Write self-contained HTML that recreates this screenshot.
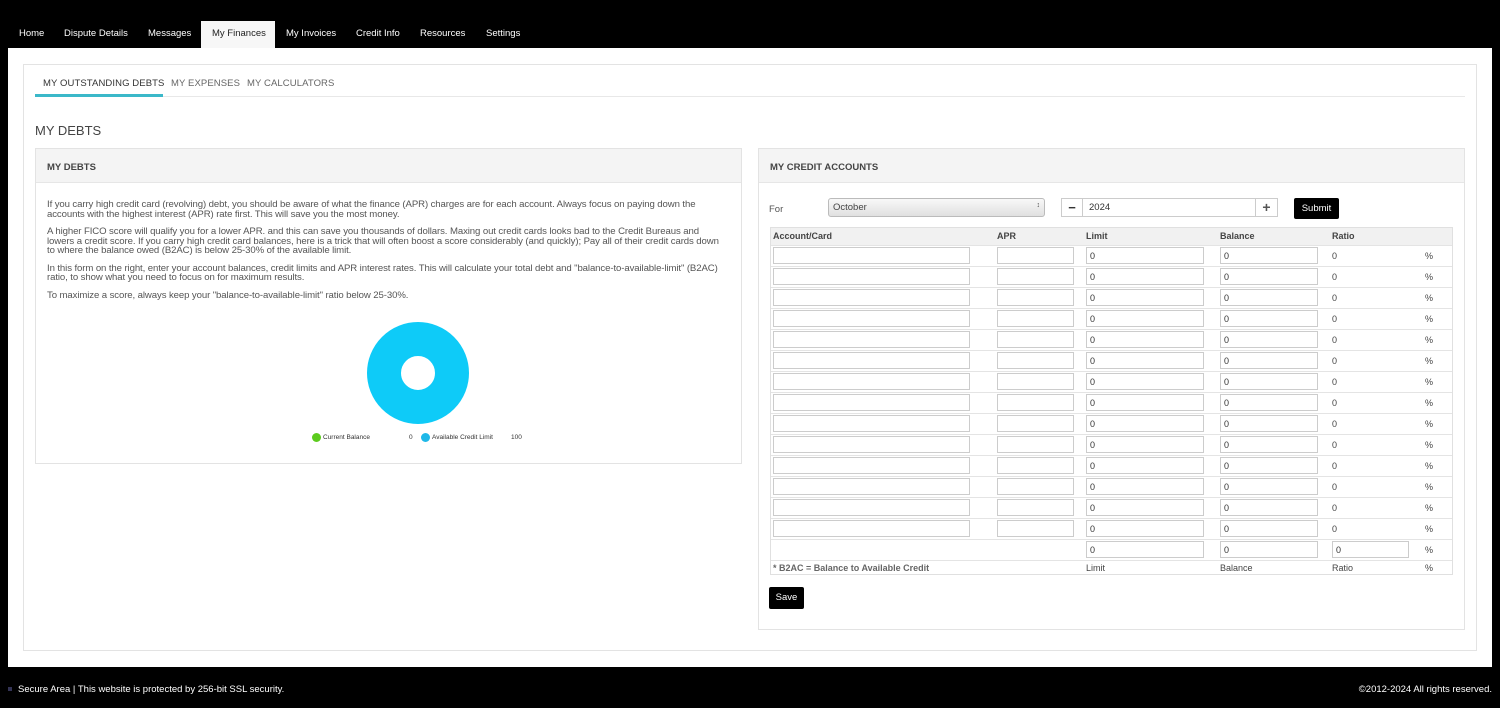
<!DOCTYPE html>
<html><head><meta charset="utf-8"><style>
*{box-sizing:border-box;margin:0;padding:0}
body{width:1500px;height:708px;background:#000;font-family:"Liberation Sans",sans-serif;position:relative;overflow:hidden;color:#333}
.a{position:absolute}
.nav{font-size:9.5px;color:#fff;top:28px}
.tab{left:201px;top:21px;width:74px;height:27px;background:#f7f7f7}
.main{left:8px;top:48px;width:1484px;height:619px;background:#fff}
.inner{left:23px;top:64px;width:1454px;height:587px;border:1px solid #e3e3e3}
.sub{font-size:9.5px;top:78px;color:#666;letter-spacing:.1px}
.panel{border:1px solid #e3e3e3;background:#fff}
.ph{background:#f4f4f4;border-bottom:1px solid #e6e6e6;height:34px;font-size:9.5px;font-weight:bold;color:#444;padding:13px 0 0 11px}
.txt{font-size:9.6px;color:#555;line-height:9.5px;letter-spacing:-.1px;width:676px}
.txt p{margin-bottom:8px}
.tb{left:770px;top:227px;width:683px;height:348px;border:1px solid #e0e0e0;font-size:9px;color:#444}
.r{position:absolute;left:0;width:681px;height:21px;border-top:1px solid #e4e4e4}
.r>*{position:absolute}
.in{height:17px;top:1px;border:1px solid #ccc;font-size:9px;padding:3px 0 0 3px;color:#333}
.t{top:5px}
.c1{left:2px;width:197px}.c2{left:226px;width:77px}.c3{left:315px;width:118px}.c4{left:449px;width:98px}.c5{left:561px}.c6{left:654px}
</style></head><body>
<div class="a nav tab"></div>
<div class="a nav" style="left:19px">Home</div>
<div class="a nav" style="left:64px">Dispute Details</div>
<div class="a nav" style="left:148px">Messages</div>
<div class="a nav" style="left:212px;color:#222">My Finances</div>
<div class="a nav" style="left:286px">My Invoices</div>
<div class="a nav" style="left:356px">Credit Info</div>
<div class="a nav" style="left:420px">Resources</div>
<div class="a nav" style="left:486px">Settings</div>
<div class="a main"></div>
<div class="a inner"></div>
<div class="a sub" style="left:43px;color:#333">MY OUTSTANDING DEBTS</div>
<div class="a sub" style="left:171px">MY EXPENSES</div>
<div class="a sub" style="left:247px">MY CALCULATORS</div>
<div class="a" style="left:35px;top:96px;width:1430px;height:1px;background:#e8e8e8"></div>
<div class="a" style="left:35px;top:94px;width:128px;height:3px;background:#3bb8c9"></div>
<div class="a" style="left:35px;top:123px;font-size:13px;color:#444">MY DEBTS</div>

<div class="a panel" style="left:35px;top:148px;width:707px;height:316px"><div class="ph">MY DEBTS</div></div>
<div class="a txt" style="left:47px;top:200px">
<p>If you carry high credit card (revolving) debt, you should be aware of what the finance (APR) charges are for each account. Always focus on paying down the accounts with the highest interest (APR) rate first. This will save you the most money.</p>
<p>A higher FICO score will qualify you for a lower APR. and this can save you thousands of dollars. Maxing out credit cards looks bad to the Credit Bureaus and lowers a credit score. If you carry high credit card balances, here is a trick that will often boost a score considerably (and quickly); Pay all of their credit cards down to where the balance owed (B2AC) is below 25-30% of the available limit.</p>
<p>In this form on the right, enter your account balances, credit limits and APR interest rates. This will calculate your total debt and "balance-to-available-limit" (B2AC) ratio, to show what you need to focus on for maximum results.</p>
<p>To maximize a score, always keep your "balance-to-available-limit" ratio below 25-30%.</p>
</div>
<svg class="a" style="left:360px;top:316px" width="120" height="115"><circle cx="58" cy="57" r="34" fill="none" stroke="#0ecbf8" stroke-width="34"/></svg>
<div class="a" style="left:312px;top:433px;width:9px;height:9px;border-radius:50%;background:#5ccb1e"></div>
<div class="a" style="left:323px;top:434px;font-size:6.5px;color:#333">Current Balance</div>
<div class="a" style="left:409px;top:434px;font-size:6.5px">0</div>
<div class="a" style="left:421px;top:433px;width:9px;height:9px;border-radius:50%;background:#1fb8e8"></div>
<div class="a" style="left:432px;top:434px;font-size:6.5px">Available Credit Limit</div>
<div class="a" style="left:511px;top:434px;font-size:6.5px">100</div>

<div class="a panel" style="left:758px;top:148px;width:707px;height:482px"><div class="ph">MY CREDIT ACCOUNTS</div></div>
<div class="a" style="left:769px;top:204px;font-size:9.5px;color:#555">For</div>
<div class="a" style="left:828px;top:198px;width:217px;height:19px;border:1px solid #bbb;border-radius:3px;background:linear-gradient(#f8f8f8,#e0e0e0);font-size:9.5px;padding:3px 4px;color:#444">October<span style="float:right;font-size:7px">&#x2195;</span></div>
<div class="a" style="left:1061px;top:198px;width:22px;height:19px;border:1px solid #ccc;font-size:13px;text-align:center;line-height:17px;font-weight:bold">&minus;</div>
<div class="a" style="left:1083px;top:198px;width:173px;height:19px;border:1px solid #ccc;border-left:none;font-size:9.5px;padding:3px 6px">2024</div>
<div class="a" style="left:1255px;top:198px;width:23px;height:19px;border:1px solid #ccc;font-size:14px;text-align:center;line-height:17px;font-weight:bold;color:#555">+</div>
<div class="a" style="left:1294px;top:198px;width:45px;height:21px;background:#000;color:#fff;font-size:9.5px;text-align:center;line-height:21px;border-radius:2px">Submit</div>

<div class="a tb">
<div class="r" style="top:0;height:18px;border:none;background:#f1f1f1;font-weight:bold"><span class="t c1" style="top:3px">Account/Card</span><span class="t c2" style="top:3px">APR</span><span class="t c3" style="top:3px">Limit</span><span class="t c4" style="top:3px">Balance</span><span class="t c5" style="top:3px">Ratio</span></div>
<div class="r" style="top:17px"><span class="in c1"></span><span class="in c2"></span><span class="in c3">0</span><span class="in c4">0</span><span class="t c5">0</span><span class="t c6">%</span></div>
<div class="r" style="top:38px"><span class="in c1"></span><span class="in c2"></span><span class="in c3">0</span><span class="in c4">0</span><span class="t c5">0</span><span class="t c6">%</span></div>
<div class="r" style="top:59px"><span class="in c1"></span><span class="in c2"></span><span class="in c3">0</span><span class="in c4">0</span><span class="t c5">0</span><span class="t c6">%</span></div>
<div class="r" style="top:80px"><span class="in c1"></span><span class="in c2"></span><span class="in c3">0</span><span class="in c4">0</span><span class="t c5">0</span><span class="t c6">%</span></div>
<div class="r" style="top:101px"><span class="in c1"></span><span class="in c2"></span><span class="in c3">0</span><span class="in c4">0</span><span class="t c5">0</span><span class="t c6">%</span></div>
<div class="r" style="top:122px"><span class="in c1"></span><span class="in c2"></span><span class="in c3">0</span><span class="in c4">0</span><span class="t c5">0</span><span class="t c6">%</span></div>
<div class="r" style="top:143px"><span class="in c1"></span><span class="in c2"></span><span class="in c3">0</span><span class="in c4">0</span><span class="t c5">0</span><span class="t c6">%</span></div>
<div class="r" style="top:164px"><span class="in c1"></span><span class="in c2"></span><span class="in c3">0</span><span class="in c4">0</span><span class="t c5">0</span><span class="t c6">%</span></div>
<div class="r" style="top:185px"><span class="in c1"></span><span class="in c2"></span><span class="in c3">0</span><span class="in c4">0</span><span class="t c5">0</span><span class="t c6">%</span></div>
<div class="r" style="top:206px"><span class="in c1"></span><span class="in c2"></span><span class="in c3">0</span><span class="in c4">0</span><span class="t c5">0</span><span class="t c6">%</span></div>
<div class="r" style="top:227px"><span class="in c1"></span><span class="in c2"></span><span class="in c3">0</span><span class="in c4">0</span><span class="t c5">0</span><span class="t c6">%</span></div>
<div class="r" style="top:248px"><span class="in c1"></span><span class="in c2"></span><span class="in c3">0</span><span class="in c4">0</span><span class="t c5">0</span><span class="t c6">%</span></div>
<div class="r" style="top:269px"><span class="in c1"></span><span class="in c2"></span><span class="in c3">0</span><span class="in c4">0</span><span class="t c5">0</span><span class="t c6">%</span></div>
<div class="r" style="top:290px"><span class="in c1"></span><span class="in c2"></span><span class="in c3">0</span><span class="in c4">0</span><span class="t c5">0</span><span class="t c6">%</span></div>
<div class="r" style="top:311px"><span class="in c3">0</span><span class="in c4">0</span><span class="in c5" style="width:77px">0</span><span class="t c6">%</span></div>
<div class="r" style="top:332px;height:14px"><span class="c1" style="top:2px;font-weight:bold;color:#666">* B2AC = Balance to Available Credit</span><span class="c3" style="top:2px;width:auto">Limit</span><span class="c4" style="top:2px;width:auto">Balance</span><span class="c5" style="top:2px">Ratio</span><span class="c6" style="top:2px">%</span></div>
</div>
<div class="a" style="left:769px;top:587px;width:35px;height:22px;background:#000;color:#fff;font-size:9.5px;text-align:center;line-height:22px;border-radius:2px">Save</div>

<div class="a" style="left:8px;top:687px;width:4px;height:4px;background:#335"></div>
<div class="a" style="left:18px;top:684px;font-size:9.5px;color:#fff">Secure Area | This website is protected by 256-bit SSL security.</div>
<div class="a" style="right:8px;top:684px;font-size:9.5px;color:#fff">©2012-2024 All rights reserved.</div>
</body></html>
